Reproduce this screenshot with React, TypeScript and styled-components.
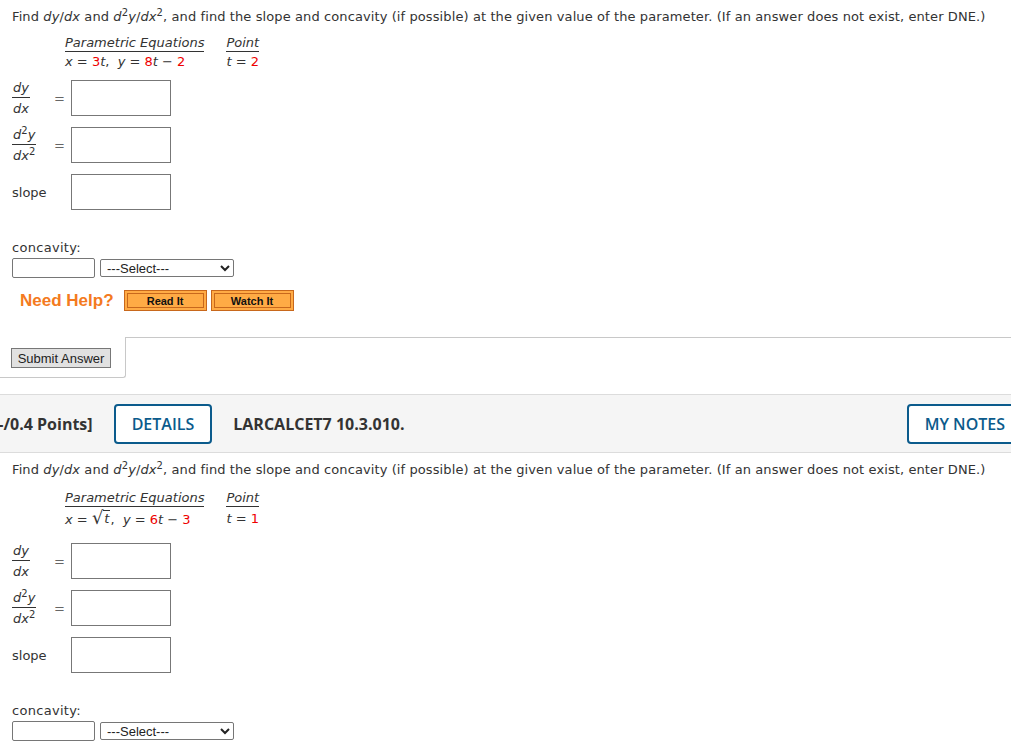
import React from "react";
import styled, { createGlobalStyle } from "styled-components";

const GlobalStyle = createGlobalStyle`
  html, body {
    margin: 0;
    padding: 0;
    overflow: hidden;
    background: #fff;
  }
  body {
    font-family: "DejaVu Sans", Verdana, sans-serif;
    font-size: 13px;
    color: #333;
  }
`;

type Question = {
  x: React.ReactNode;
  y: React.ReactNode;
  t: string;
};

// 問題のテキスト部分
const QuestionBody = styled.div`
  padding-left: 12px;
`;

const Intro = styled.p`
  margin: 0;
  line-height: 16px;
  letter-spacing: 0.1px;
  padding-top: ${(p: { $top: number }) => p.$top}px;
  white-space: nowrap;
`;

const EqTable = styled.table`
  margin-left: 50px;
  border-collapse: separate;
  border-spacing: 3px 0;
  margin-top: ${(p: { $top: number }) => p.$top}px;
`;

const EqHead = styled.th`
  font-weight: normal;
  font-style: italic;
  text-align: left;
  padding: 0;
  border-bottom: 1px solid #333;
  line-height: 16px;
`;

const EqCell = styled.td`
  padding: 2px 0 0 0;
  line-height: 16px;
  white-space: nowrap;
`;

const Spacer = styled.th`
  width: 14px;
`;

const V = styled.i`
  font-style: italic;
`;

const Num = styled.span`
  color: #e00;
`;

const Sqrt = styled.span`
  display: inline-flex;
  align-items: flex-end;
`;

const Radical = styled.span`
  font-size: 18px;
  line-height: 17px;
`;

const Radicand = styled.span`
  border-top: 1px solid #333;
  padding: 0 1px;
  line-height: 15px;
  font-style: italic;
`;

const Answers = styled.div`
  display: grid;
  grid-template-columns: 40px 19px 100px;
  row-gap: 11px;
  align-items: center;
  margin-top: ${(p: { $top: number }) => p.$top}px;
`;

const Frac = styled.span`
  display: inline-flex;
  flex-direction: column;
  align-items: center;
  font-style: italic;
  line-height: 15px;
  justify-self: start;
`;

const FracTop = styled.span`
  padding: 0 1px 2px;
  border-bottom: 1px solid #333;
  align-self: stretch;
  text-align: center;
`;

const FracBottom = styled.span`
  padding-top: 3px;
`;

const Sup = styled.sup`
  font-size: 10px;
  line-height: 0;
  font-style: normal;
`;

const Equals = styled.span`
  color: #666;
  text-align: left;
  padding-left: 2px;
`;

const Label = styled.span`
  grid-column: span 2;
`;

const AnswerBox = styled.input`
  box-sizing: border-box;
  width: 100px;
  height: 36px;
  border: 1px solid #777;
  margin: 0;
`;

const ConcavityLabel = styled.div`
  margin-top: ${(p: { $top: number }) => p.$top}px;
  line-height: 16px;
  letter-spacing: 0.3px;
`;

const ConcavityRow = styled.div`
  display: flex;
  align-items: center;
  gap: 5px;
  margin-top: 2px;
`;

const SmallBox = styled.input`
  box-sizing: border-box;
  width: 83px;
  height: 20px;
  border: 1px solid #767676;
  border-radius: 2px;
  margin: 0;
`;

const Select = styled.select`
  box-sizing: border-box;
  width: 134px;
  height: 18px;
  border: 1px solid #767676;
  border-radius: 2px;
  font-family: "Liberation Sans", Arial, sans-serif;
  font-size: 13px;
  color: #222;
  background: #fff;
  padding: 0 2px;
  margin: 0;
`;

const HelpRow = styled.div`
  display: flex;
  align-items: center;
  gap: 4px;
  margin: 12px 0 0 8px;
`;

const HelpText = styled.span`
  font-family: "Liberation Sans", Arial, sans-serif;
  font-weight: bold;
  font-size: 17px;
  color: #f47a20;
  margin-right: 6px;
`;

const HelpButton = styled.button`
  width: 83px;
  height: 21px;
  padding: 0;
  border: 1px solid #c8681c;
  background: #ffab45;
  box-shadow: inset 0 0 0 2px #ffab45, inset 0 0 0 3px #c8681c;
  font-family: "Liberation Sans", Arial, sans-serif;
  font-weight: bold;
  font-size: 11px;
  color: #111;
`;

// 回答ボタンの行
const SubmitRow = styled.div`
  display: flex;
  margin-top: 26px;
  height: 41px;
`;

const SubmitCell = styled.div`
  box-sizing: border-box;
  width: 126px;
  padding: 11px 0 0 11px;
  border-bottom: 1px solid #c8c8c8;
  border-right: 1px solid #c8c8c8;
  border-bottom-right-radius: 3px;
`;

const SubmitRest = styled.div`
  flex: 1;
  border-top: 1px solid #c8c8c8;
  margin-left: -1px;
`;

const SubmitButton = styled.button`
  box-sizing: border-box;
  height: 20px;
  width: 100px;
  padding: 0;
  border: 1px solid #777;
  background: #e1e1e1;
  font-family: "Liberation Sans", Arial, sans-serif;
  font-size: 13px;
  color: #222;
`;

const Header = styled.div`
  box-sizing: border-box;
  width: 1040px;
  height: 59px;
  margin-top: 16px;
  background: #f5f5f5;
  border-top: 1px solid #dcdcdc;
  border-bottom: 1px solid #dcdcdc;
  display: flex;
  align-items: center;
  font-family: "Open Sans", "Noto Sans", sans-serif;
  font-size: 16px;
`;

const Points = styled.span`
  font-weight: bold;
  color: #333;
  margin-left: -7px;
`;

const OutlineButton = styled.button`
  box-sizing: border-box;
  height: 40px;
  padding: 0 16px;
  border: 2px solid #0b5b8c;
  border-radius: 4px;
  background: #fff;
  color: #0b5b8c;
  font-family: "Open Sans", "Noto Sans", sans-serif;
  font-size: 16px;
  font-weight: 600;
  margin-left: ${(p: { $left: number }) => p.$left}px;
`;

const ItemId = styled.span`
  font-weight: bold;
  color: #333;
  margin-left: 21px;
`;

const Fill = styled.span`
  flex: 1;
`;

const EndGap = styled.span`
  flex: 0 0 17px;
`;

const IntroText = () => (
  <>
    Find <V>dy</V>/<V>dx</V> and <V>d</V>
    <Sup>2</Sup>
    <V>y</V>/<V>dx</V>
    <Sup>2</Sup>, and find the slope and concavity (if possible) at the given
    value of the parameter. (If an answer does not exist, enter DNE.)
  </>
);

const ProblemBlock = ({ q, tableTop, answersTop, concTop }: { q: Question; tableTop: number; answersTop: number; concTop: number }) => (
  <>
    <EqTable $top={tableTop}>
      <thead>
        <tr>
          <EqHead>Parametric Equations</EqHead>
          <Spacer />
          <EqHead>Point</EqHead>
        </tr>
      </thead>
      <tbody>
        <tr>
          <EqCell>
            <V>x</V> = {q.x}, &nbsp;<V>y</V> = {q.y}
          </EqCell>
          <td />
          <EqCell>
            <V>t</V> = <Num>{q.t}</Num>
          </EqCell>
        </tr>
      </tbody>
    </EqTable>
    <Answers $top={answersTop}>
      <Frac>
        <FracTop>dy</FracTop>
        <FracBottom>dx</FracBottom>
      </Frac>
      <Equals>=</Equals>
      <AnswerBox />
      <Frac>
        <FracTop>
          d<Sup>2</Sup>y
        </FracTop>
        <FracBottom>
          dx<Sup>2</Sup>
        </FracBottom>
      </Frac>
      <Equals>=</Equals>
      <AnswerBox />
      <Label>slope</Label>
      <AnswerBox />
    </Answers>
    <ConcavityLabel $top={concTop}>concavity:</ConcavityLabel>
    <ConcavityRow>
      <SmallBox />
      <Select defaultValue="">
        <option value="">---Select---</option>
        <option value="up">concave upward</option>
        <option value="down">concave downward</option>
        <option value="neither">neither concave upward nor concave downward</option>
      </Select>
    </ConcavityRow>
  </>
);

export default function App() {
  const q1: Question = {
    x: (
      <>
        <Num>3</Num>
        <V>t</V>
      </>
    ),
    y: (
      <>
        <Num>8</Num>
        <V>t</V> − <Num>2</Num>
      </>
    ),
    t: "2",
  };
  const q2: Question = {
    x: (
      <Sqrt>
        <Radical>√</Radical>
        <Radicand>t</Radicand>
      </Sqrt>
    ),
    y: (
      <>
        <Num>6</Num>
        <V>t</V> − <Num>3</Num>
      </>
    ),
    t: "1",
  };

  return (
    <>
      <GlobalStyle />
      <QuestionBody>
        <Intro $top={9}>
          <IntroText />
        </Intro>
        <ProblemBlock q={q1} tableTop={10} answersTop={10} concTop={30} />
        <HelpRow>
          <HelpText>Need Help?</HelpText>
          <HelpButton>Read It</HelpButton>
          <HelpButton>Watch It</HelpButton>
        </HelpRow>
      </QuestionBody>
      <SubmitRow>
        <SubmitCell>
          <SubmitButton>Submit Answer</SubmitButton>
        </SubmitCell>
        <SubmitRest />
      </SubmitRow>
      <Header>
        <Points>[-/0.4 Points]</Points>
        <OutlineButton $left={21}>DETAILS</OutlineButton>
        <ItemId>LARCALCET7 10.3.010.</ItemId>
        <Fill />
        <OutlineButton $left={0}>MY NOTES</OutlineButton>
        <EndGap />
      </Header>
      <QuestionBody>
        <Intro $top={9}>
          <IntroText />
        </Intro>
        <ProblemBlock q={q2} tableTop={12} answersTop={15} concTop={30} />
      </QuestionBody>
    </>
  );
}
